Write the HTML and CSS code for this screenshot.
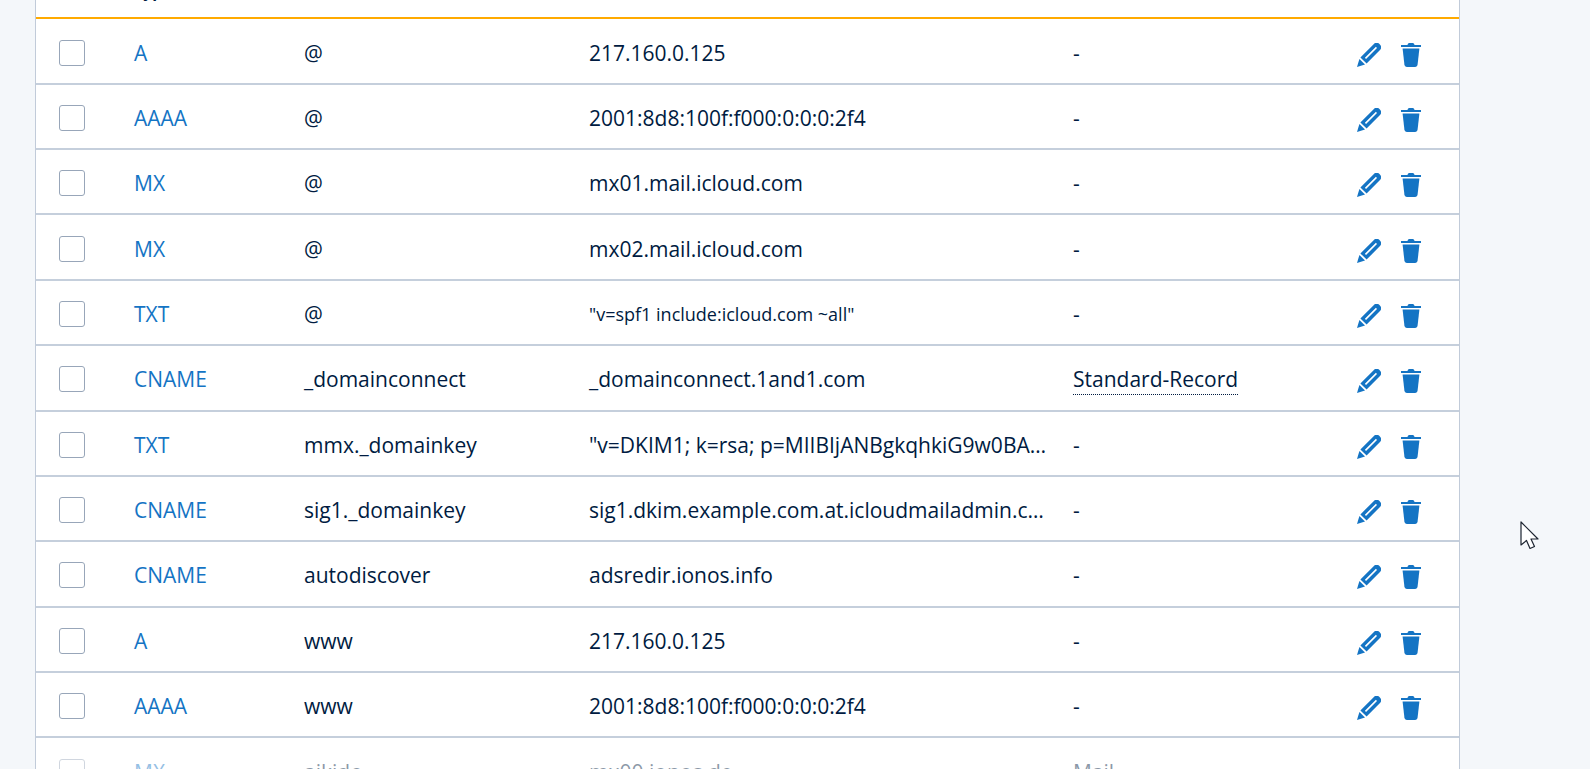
FILE: index.html
```html
<!DOCTYPE html>
<html lang="de">
<head>
<meta charset="utf-8">
<title>DNS</title>
<link rel="stylesheet" href="styles.css">
</head>
<body>
<svg class="defs" width="0" height="0" aria-hidden="true">
  <symbol id="pen" viewBox="0 0 24 24">
    <path d="M0 24 2.4 16 8 21.6Z"/>
    <path fill-rule="evenodd" d="M3.4 14.4 16.9.9C18.6-.6 20.7-.6 22.2.8L23.1 1.7C24.6 3.2 24.6 5.4 23 7L9.6 20.6ZM7.9 14.8 9 15.9 20 4.9 18.9 3.8Z"/>
  </symbol>
  <symbol id="bin" viewBox="0 0 20 24">
    <path d="M6.5 2C6.8.6 7.6 0 8.6 0H11.4C12.4 0 13.2.6 13.5 2H20V4H0V2Z"/>
    <path d="M1.6 5.6H18.4L16.6 21.6C16.4 23.2 15.5 24 14 24H6C4.5 24 3.6 23.2 3.4 21.6Z"/>
  </symbol>
</svg>
<main class="table">
  <div class="row head"><span class="cell-check"></span><span class="type-head">Typ</span><span></span><span></span><span></span><span></span></div>

  <div class="row"><span class="cell-check"><span class="box"></span></span><a class="type">A</a><span>@</span><span>217.160.0.125</span><span>-</span><span class="acts"><svg class="pen"><use href="#pen"/></svg><svg class="bin"><use href="#bin"/></svg></span></div>
  <div class="row"><span class="cell-check"><span class="box"></span></span><a class="type">AAAA</a><span>@</span><span>2001:8d8:100f:f000:0:0:0:2f4</span><span>-</span><span class="acts"><svg class="pen"><use href="#pen"/></svg><svg class="bin"><use href="#bin"/></svg></span></div>
  <div class="row"><span class="cell-check"><span class="box"></span></span><a class="type">MX</a><span>@</span><span>mx01.mail.icloud.com</span><span>-</span><span class="acts"><svg class="pen"><use href="#pen"/></svg><svg class="bin"><use href="#bin"/></svg></span></div>
  <div class="row"><span class="cell-check"><span class="box"></span></span><a class="type">MX</a><span>@</span><span>mx02.mail.icloud.com</span><span>-</span><span class="acts"><svg class="pen"><use href="#pen"/></svg><svg class="bin"><use href="#bin"/></svg></span></div>
  <div class="row"><span class="cell-check"><span class="box"></span></span><a class="type">TXT</a><span>@</span><span class="small">"v=spf1 include:icloud.com ~all"</span><span>-</span><span class="acts"><svg class="pen"><use href="#pen"/></svg><svg class="bin"><use href="#bin"/></svg></span></div>
  <div class="row"><span class="cell-check"><span class="box"></span></span><a class="type">CNAME</a><span>_domainconnect</span><span>_domainconnect.1and1.com</span><span><span class="note">Standard-Record</span></span><span class="acts"><svg class="pen"><use href="#pen"/></svg><svg class="bin"><use href="#bin"/></svg></span></div>
  <div class="row"><span class="cell-check"><span class="box"></span></span><a class="type">TXT</a><span>mmx._domainkey</span><span class="clip">"v=DKIM1; k=rsa; p=MIIBIjANBgkqhkiG9w0BAQEFAAOCAQ8A</span><span>-</span><span class="acts"><svg class="pen"><use href="#pen"/></svg><svg class="bin"><use href="#bin"/></svg></span></div>
  <div class="row"><span class="cell-check"><span class="box"></span></span><a class="type">CNAME</a><span>sig1._domainkey</span><span class="clip">sig1.dkim.example.com.at.icloudmailadmin.com</span><span>-</span><span class="acts"><svg class="pen"><use href="#pen"/></svg><svg class="bin"><use href="#bin"/></svg></span></div>
  <div class="row"><span class="cell-check"><span class="box"></span></span><a class="type">CNAME</a><span>autodiscover</span><span>adsredir.ionos.info</span><span>-</span><span class="acts"><svg class="pen"><use href="#pen"/></svg><svg class="bin"><use href="#bin"/></svg></span></div>
  <div class="row"><span class="cell-check"><span class="box"></span></span><a class="type">A</a><span>www</span><span>217.160.0.125</span><span>-</span><span class="acts"><svg class="pen"><use href="#pen"/></svg><svg class="bin"><use href="#bin"/></svg></span></div>
  <div class="row"><span class="cell-check"><span class="box"></span></span><a class="type">AAAA</a><span>www</span><span>2001:8d8:100f:f000:0:0:0:2f4</span><span>-</span><span class="acts"><svg class="pen"><use href="#pen"/></svg><svg class="bin"><use href="#bin"/></svg></span></div>
  <div class="row faded"><span class="cell-check"><span class="box"></span></span><a class="type">MX</a><span>aikido</span><span>mx00.ionos.de</span><span>Mail</span><span class="acts"></span></div>
</main>
<svg class="cursor" viewBox="0 0 19 29" width="19" height="29" aria-hidden="true">
  <path d="M1 1V24L6.5 19.5 10 27.5 14.5 25.5 11 18H18Z" fill="#fff" stroke="#1c2430" stroke-width="1.2" stroke-linejoin="round"/>
</svg>
</body>
</html>
```
FILE: styles.css
```css
* { box-sizing: border-box; }
html, body { height: 100%; }
body {
  margin: 0;
  overflow: hidden;
  background: #f4f7fa;
  color: #001b41;
  font-family: "Open Sans", "Liberation Sans", sans-serif;
  font-size: 21px;
}
.defs { position: absolute; }
.table {
  width: 1425px;
  margin-left: 35px;
  margin-top: -30px;
  background: #fff;
  border-left: 1px solid #c1cbd9;
  border-right: 1px solid #c1cbd9;
}
.row {
  display: grid;
  grid-template-columns: 98px 170px 285px 484px 252px 1fr;
  align-items: center;
  height: 65.36px;
  border-bottom: 2px solid #c5cfdc;
  padding-top: 3px;
}
.row > span { min-width: 0; }
.head {
  height: 49.4px;
  align-items: end;
  border-bottom: 2px solid #ffaa00;
  padding-top: 0;
  padding-bottom: 18px;
  line-height: 1;
}
.type-head { font-weight: 700; font-size: 16px; }
.cell-check { padding-left: 23px; display: flex; }
.box {
  display: block;
  width: 26px;
  height: 26px;
  border: 1px solid #98a6b9;
  border-radius: 3px;
  background: #fff;
}
.type { color: #1474c4; }
.small { font-size: 18px; }
.clip {
  white-space: nowrap;
  overflow: hidden;
  text-overflow: ellipsis;
  padding-right: 26px;
}
.note { border-bottom: 1px dotted #001b41; padding-bottom: 1px; }
.acts {
  display: flex;
  align-items: center;
  gap: 20px;
  padding-left: 32px;
  margin-top: 4px;
}
.pen { width: 24px; height: 24px; fill: #1474c4; }
.bin { width: 20px; height: 24px; fill: #1474c4; }
.faded > * { opacity: .45; }
.cursor { position: absolute; left: 1520px; top: 521px; }
```
